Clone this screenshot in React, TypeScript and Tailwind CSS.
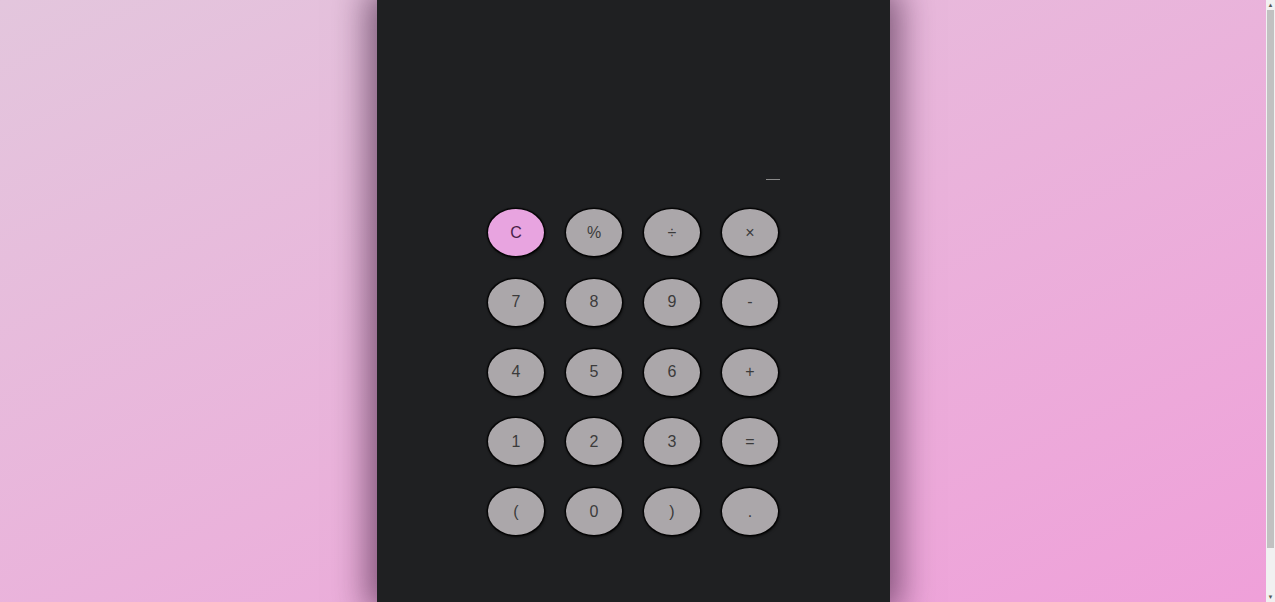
import React, { useState } from "react";

const keys: string[] = [
  "C", "%", "÷", "×",
  "7", "8", "9", "-",
  "4", "5", "6", "+",
  "1", "2", "3", "=",
  "(", "0", ")", ".",
];

const App: React.FC = () => {
  const [display, setDisplay] = useState<string>("");

  const handleClick = (key: string) => {
    if (key === "C") {
      setDisplay("");
      return;
    }
    if (key === "=") {
      try {
        const expr = display.replace(/×/g, "*").replace(/÷/g, "/");
        // eslint-disable-next-line no-new-func
        setDisplay(String(Function(`return (${expr})`)()));
      } catch {
        setDisplay("Error");
      }
      return;
    }
    setDisplay((prev) => prev + key);
  };

  return (
    <div
      className="h-[602px] w-full flex overflow-hidden"
      style={{ fontFamily: '"Liberation Sans", Arial, sans-serif' }}
    >
      <div className="flex-1 flex justify-center bg-gradient-to-br from-[#e3c6dd] to-[#efa0d9]">
        <div className="w-[513px] h-[602px] bg-[#1f2022] shadow-[0_0_32px_10px_rgba(40,10,40,0.55)] flex flex-col items-center">
          <div className="w-[294px] h-[181px] flex items-end justify-end pb-px">
            {display ? (
              <span className="text-[#c8c8c8] text-2xl">{display}</span>
            ) : (
              <span className="block w-[14px] h-px bg-[#8a8a8a]" />
            )}
          </div>
          <div className="grid grid-cols-4 gap-x-[22px] gap-y-[22.75px] mt-[28px]">
            {keys.map((key) => (
              <button
                key={key}
                onClick={() => handleClick(key)}
                className={`w-[56px] h-[47px] rounded-[50%] shadow-[0_0_1px_1.5px_rgba(0,0,0,0.85),1px_2px_3px_rgba(0,0,0,0.6)] text-[16px] focus:outline-none ${
                  key === "C"
                    ? "bg-[#e8a4e0] text-[#4a2147]"
                    : "bg-[#aba7aa] text-[#3b3b3b]"
                }`}
              >
                {key}
              </button>
            ))}
          </div>
        </div>
      </div>
      {/* page scrollbar */}
      <div className="w-[9px] h-full bg-[#f1f1f1] flex flex-col items-center">
        <span className="text-[6px] leading-[10px] text-[#555]">▲</span>
        <div className="w-[7px] flex-1 bg-[#c1c1c1] mb-[44px]" />
        <span className="text-[6px] leading-[10px] text-[#555]">▼</span>
      </div>
    </div>
  );
};

export default App;
